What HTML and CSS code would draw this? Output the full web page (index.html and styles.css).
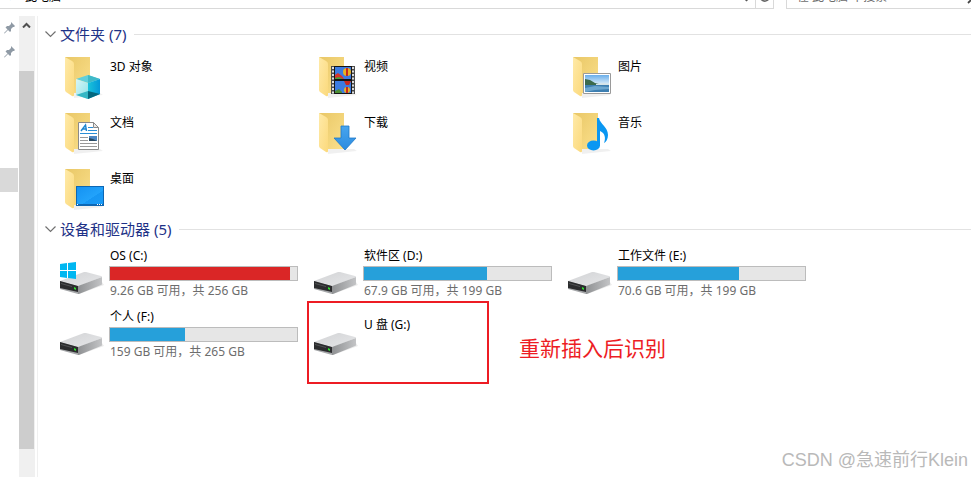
FILE: index.html
```html
<!DOCTYPE html>
<html lang="zh-CN">
<head>
  <meta charset="UTF-8">
  <meta name="viewport" content="width=device-width, initial-scale=1.0">
  <title>此电脑</title>
  <link rel="stylesheet" href="styles.css">
</head>
<body>
  <!-- shared icon shapes -->
  <svg class="sprite" width="0" height="0" aria-hidden="true">
    <defs>
      <linearGradient id="g-back" x1="0" y1="0" x2="1" y2="1">
        <stop offset="0" stop-color="#e9c766"/>
        <stop offset="1" stop-color="#fbe08c"/>
      </linearGradient>
      <linearGradient id="g-flap" x1="0" y1="0" x2="1" y2="1">
        <stop offset="0" stop-color="#ffeaa8"/>
        <stop offset="1" stop-color="#fbd97c"/>
      </linearGradient>
      <linearGradient id="g-top" x1="0" y1="0" x2="1" y2="1">
        <stop offset="0" stop-color="#d2d3d5"/>
        <stop offset="1" stop-color="#e6e7e9"/>
      </linearGradient>
      <linearGradient id="g-side" x1="0" y1="0" x2="1" y2="0">
        <stop offset="0" stop-color="#8f9193"/>
        <stop offset="1" stop-color="#c3c4c6"/>
      </linearGradient>
      <linearGradient id="g-cube-l" x1="0" y1="0" x2="1" y2="1">
        <stop offset="0" stop-color="#d8f6f7"/>
        <stop offset="1" stop-color="#8ee2e8"/>
      </linearGradient>
      <linearGradient id="g-cube-r" x1="0" y1="0" x2="1" y2="0">
        <stop offset="0" stop-color="#19c3da"/>
        <stop offset="1" stop-color="#0498d8"/>
      </linearGradient>
      <linearGradient id="g-screen" x1="0" y1="0" x2="1" y2="1">
        <stop offset="0" stop-color="#1592f2"/>
        <stop offset="0.6" stop-color="#22a3fb"/>
        <stop offset="0.61" stop-color="#1797f4"/>
        <stop offset="1" stop-color="#1a9bf7"/>
      </linearGradient>
      <linearGradient id="g-sky" x1="0" y1="0" x2="0" y2="1">
        <stop offset="0" stop-color="#6aaeea"/>
        <stop offset="1" stop-color="#e4f2fb"/>
      </linearGradient>
      <linearGradient id="g-arrow" x1="0" y1="0" x2="0" y2="1">
        <stop offset="0" stop-color="#48a5ee"/>
        <stop offset="1" stop-color="#2b8be0"/>
      </linearGradient>
      <symbol id="folder" viewBox="0 0 48 48">
        <path fill="#000" opacity="0.06" d="M18 40h26l3 2-29 3z"/>
        <path fill="url(#g-back)" d="M9 4h25v36H17z"/>
        <path fill="url(#g-flap)" d="M9 4l7 4q2 1 2 3v31q0 2-2 1l-6-4q-1-1-1-2z"/>
      </symbol>
      <symbol id="drive" viewBox="0 0 48 48">
        <path fill="#000" opacity="0.08" d="M23 45l25-9-2-3z"/>
        <path fill="url(#g-top)" d="M4 32l24-9q1 0 2 0l15 4q1 0 1 1L23 37z"/>
        <path fill="url(#g-side)" d="M22 37l24-9v7q0 1-1 1L23 45h-1z"/>
        <path fill="#a5a7a9" d="M4 32l18 5v8L4 40z"/>
        <path fill="#2b2c2e" d="M4 32l18 5v6L4 39z"/>
        <path fill="#505254" d="M5 34l11 3v1L5 35z"/>
        <path fill="#2fe02f" d="M18 38l2 1v2l-2-1z"/>
      </symbol>
      <symbol id="pin" viewBox="0 0 12 12">
        <path fill="#8f9aa5" d="M7 0l4 4-1 1-1 0-2 2v2L6 10 4 8l-3.500 3.500L0 11l3.500-3.500L1.500 5.500 3 4h2l2-2V1z"/>
      </symbol>
      <symbol id="chevron" viewBox="0 0 11 8">
        <path fill="none" stroke="#707070" stroke-width="1.200" d="M0.500 1.500l5 5 5-5"/>
      </symbol>
    </defs>
  </svg>

  <header class="toolbar">
    <div class="address">
      <span class="crumb-sep">›</span>
      <span class="crumb">此电脑</span>
      <svg class="address-arrow" width="9" height="10" viewBox="0 0 9 10"><path fill="none" stroke="#555" stroke-width="1.500" d="M1 5l3.500 3.500L8 5"/></svg>
      <button class="refresh" aria-label="刷新">
        <svg width="12" height="14" viewBox="0 0 12 14"><path fill="none" stroke="#666" stroke-width="1.600" d="M9.500 5a4.500 4.500 0 1 0 .8 3M10 1v4H6.500"/></svg>
      </button>
    </div>
    <div class="search">
      <input type="text" class="search-input" aria-label="搜索" placeholder="在 此电脑 中搜索">
      <svg width="14" height="14" viewBox="0 0 14 14"><path fill="none" stroke="#444" stroke-width="1.800" d="M1 13l5-5"/><circle cx="8.500" cy="5.500" r="4" fill="none" stroke="#444"/></svg>
    </div>
  </header>

  <div class="explorer">
    <nav class="sidebar" aria-label="快速访问">
      <div class="nav-row"><svg width="12" height="12"><use href="#pin"/></svg></div>
      <div class="nav-row"><svg width="12" height="12"><use href="#pin"/></svg></div>
      <div class="nav-row nav-selected"></div>
    </nav>
    <div class="scrollbar" aria-hidden="true">
      <div class="scroll-up">
        <svg width="9" height="6" viewBox="0 0 9 6"><path fill="none" stroke="#505050" stroke-width="2" d="M1 5.500L4.500 2 8 5.500"/></svg>
      </div>
      <div class="scroll-thumb"></div>
      <div class="scroll-rest"></div>
    </div>

    <main class="content">
      <section>
        <h2 class="group-title"><svg width="11" height="8"><use href="#chevron"/></svg>文件夹 (7)</h2>
        <div class="tiles folders">
          <a href="#" class="tile">
            <svg class="icon" viewBox="0 0 48 48">
              <use href="#folder"/>
              <path fill="#62cfda" d="M20 26l12-4 12 4-12 4z"/>
              <path fill="#3fb9c8" d="M32 22l12 4-12 4z"/>
              <path fill="url(#g-cube-l)" d="M20 26l12 4v16l-12-4z"/>
              <path fill="url(#g-cube-r)" d="M32 30l12-4v15l-12 5z"/>
              <path fill="#35b7c5" d="M20 42l12-4v8z"/>
              <path fill="#04687f" d="M32 38l12 3-12 5z"/>
            </svg>
            <span class="tile-name">3D 对象</span>
          </a>
          <a href="#" class="tile">
            <svg class="icon" viewBox="0 0 48 48">
              <use href="#folder"/>
              <path fill="#4a4a4a" d="M21 13h24v28H21z"/>
              <path fill="#151515" d="M24 13h18v28H24z"/>
              <path fill="#3c7be0" d="M25 14h16v12H25zM25 28h16v12H25z"/>
              <path fill="#d8342c" d="M25 22l3-2 4 3 2 3h-9z"/>
              <path fill="#47a13b" d="M25 25l4-1 4 2h-8z"/>
              <circle cx="37" cy="19" r="4" fill="#e8b020"/>
              <path fill="#c8281e" d="M36 15h2v8h-2zM34 28h7l-2 4h-3z"/>
              <path fill="#4d8e35" d="M25 38l4-2 3 3v1h-7z"/>
              <circle cx="37" cy="37" r="3" fill="#e8b020"/>
              <path fill="#c8281e" d="M36 34h2v6h-2z"/>
              <path stroke="#ddd" stroke-width="2" stroke-dasharray="2 1.500" d="M23 14v27M43 14v27"/>
            </svg>
            <span class="tile-name">视频</span>
          </a>
          <a href="#" class="tile">
            <svg class="icon" viewBox="0 0 48 48">
              <use href="#folder"/>
              <path fill="#fff" stroke="#9a9a9a" d="M19.500 20.500h27v20h-27z"/>
              <path fill="url(#g-sky)" d="M21 22h24v10H21z"/>
              <path fill="#3e7fb1" d="M21 31h24v8H21z"/>
              <path fill="#3c6a4c" d="M21 26l5 1 5 3 8 2H21z"/>
              <path fill="#6da7cf" d="M21 35l10-2 14 1v2l-14 1-10 2z"/>
              <path fill="#d6e4e8" d="M32 31l8-1 5 1v1H32z"/>
            </svg>
            <span class="tile-name">图片</span>
          </a>
          <a href="#" class="tile">
            <svg class="icon" viewBox="0 0 48 48">
              <use href="#folder"/>
              <path fill="#fff" stroke="#8a8a8a" d="M22.500 13.500h15l5 5v22h-20z"/>
              <path fill="#e8e8e8" stroke="#8a8a8a" d="M37.500 13.500v5h5z"/>
              <path fill="none" stroke="#1f86d0" stroke-width="1.500" d="M25 22l4.500-6 1 6M27 20h3.500"/>
              <path stroke="#2a8ed6" d="M32 18.500h5M32 21.500h9M24 24.500h17"/>
              <path stroke="#999" d="M24 28.500h8M24 31.500h8M24 34.500h17M24 37.500h17"/>
              <path fill="#4c86c2" d="M33 27h8v5h-8z"/>
              <path fill="#28475f" d="M33 29l4 1 4 2h-8z"/>
            </svg>
            <span class="tile-name">文档</span>
          </a>
          <a href="#" class="tile">
            <svg class="icon" viewBox="0 0 48 48">
              <use href="#folder"/>
              <path fill="url(#g-arrow)" stroke="#1e78c8" stroke-width="0.800" d="M31 17h8v12h7L35 41 24 29h7z"/>
            </svg>
            <span class="tile-name">下载</span>
          </a>
          <a href="#" class="tile">
            <svg class="icon" viewBox="0 0 48 48">
              <use href="#folder"/>
              <ellipse cx="29.500" cy="36.500" rx="6.500" ry="5" fill="#0a97f2"/>
              <path fill="#0a97f2" d="M33 9h2c1 6 9 9 9 17 0 4-2 7-4 8 2-5 1-10-4-12v15h-3z"/>
            </svg>
            <span class="tile-name">音乐</span>
          </a>
          <a href="#" class="tile">
            <svg class="icon" viewBox="0 0 48 48">
              <use href="#folder"/>
              <path fill="#0d67b4" d="M20 21h28v20H20z"/>
              <path fill="url(#g-screen)" d="M21 22h26v17H21z"/>
              <path stroke="#fff" d="M21 39.500h1M41 39.500h1M43 39.500h1M45 39.500h1"/>
            </svg>
            <span class="tile-name">桌面</span>
          </a>
        </div>
      </section>

      <section>
        <h2 class="group-title"><svg width="11" height="8"><use href="#chevron"/></svg>设备和驱动器 (5)</h2>
        <div class="tiles drives">
          <a href="#" class="tile">
            <svg class="icon" viewBox="0 0 48 48">
              <use href="#drive"/>
              <path fill="#00b7f1" d="M4 15l7-1v7H4zM12 14l8-1v8h-8zM4 22h7v7l-7-1zM12 22h8v8l-8-1z"/>
            </svg>
            <div class="drive-info">
              <span class="tile-name">OS (C:)</span>
              <progress class="usage usage-full" aria-label="OS (C:)" value="246.74" max="256"></progress>
              <span class="drive-space">9.26 GB 可用，共 256 GB</span>
            </div>
          </a>
          <a href="#" class="tile">
            <svg class="icon"><use href="#drive"/></svg>
            <div class="drive-info">
              <span class="tile-name">软件区 (D:)</span>
              <progress class="usage" aria-label="软件区 (D:)" value="131.1" max="199"></progress>
              <span class="drive-space">67.9 GB 可用，共 199 GB</span>
            </div>
          </a>
          <a href="#" class="tile">
            <svg class="icon"><use href="#drive"/></svg>
            <div class="drive-info">
              <span class="tile-name">工作文件 (E:)</span>
              <progress class="usage" aria-label="工作文件 (E:)" value="128.4" max="199"></progress>
              <span class="drive-space">70.6 GB 可用，共 199 GB</span>
            </div>
          </a>
          <a href="#" class="tile">
            <svg class="icon"><use href="#drive"/></svg>
            <div class="drive-info">
              <span class="tile-name">个人 (F:)</span>
              <progress class="usage" aria-label="个人 (F:)" value="106" max="265"></progress>
              <span class="drive-space">159 GB 可用，共 265 GB</span>
            </div>
          </a>
          <div class="tile-marked">
            <a href="#" class="tile">
              <svg class="icon"><use href="#drive"/></svg>
              <div class="drive-info drive-empty">
                <span class="tile-name">U 盘 (G:)</span>
              </div>
            </a>
            <div class="mark-box"></div>
            <p class="mark-note">重新插入后识别</p>
          </div>
        </div>
      </section>
    </main>
  </div>

  <div class="watermark">CSDN @急速前行Klein</div>
</body>
</html>
```
FILE: styles.css
```css
:root {
  --title: #1e3287;
  --border: #d9d9d9;
  --muted: #6d6d6d;
  --blue: #26a0da;
  --red: #da2626;
  --mark: #ed1c24;
}

* {
  margin: 0;
  padding: 0;
  box-sizing: border-box;
}

body {
  min-height: 100vh;
  display: flex;
  flex-direction: column;
  background: #fff;
  color: #000;
  font-family: "Noto Sans", "Noto Sans CJK SC", sans-serif;
  font-size: 12px;
  line-height: 18px;
}

.sprite {
  position: absolute;
}

/* only the lower edge of the address row is in view */
.toolbar {
  display: flex;
  align-items: flex-end;
  gap: 12px;
  height: 9px;
  margin-bottom: 7px;
  overflow: hidden;
}

.address,
.search {
  display: flex;
  align-items: center;
  height: 24px;
  border: 1px solid var(--border);
}

.address {
  flex: 1;
  border-left: none;
}

.crumb-sep {
  width: 25px;
  padding-left: 9px;
  color: #666;
}

.address-arrow {
  margin-left: auto;
  margin-right: 4px;
}

.refresh {
  width: 18px;
  height: 100%;
  border: none;
  border-left: 1px solid var(--border);
  background: none;
}

.search {
  width: 185px;
  padding-left: 10px;
  border-right: none;
}

.search-input {
  flex: 1 0 170px;
  min-width: 0;
  border: none;
  outline: none;
  font: inherit;
}

.search-input::placeholder {
  color: var(--muted);
}

.search svg {
  flex: none;
}

.explorer {
  flex: 1;
  display: flex;
}

.sidebar {
  width: 19px;
  padding-right: 1px;
}

.nav-row {
  display: flex;
  align-items: center;
  height: 24px;
  padding-left: 4px;
}

.nav-selected {
  margin-top: 104px;
  background: var(--border);
}

.scrollbar {
  display: flex;
  flex-direction: column;
  width: 16px;
  padding-right: 1px;
  background: #f0f0f0;
}

.scroll-up {
  height: 55px;
  padding-top: 5px;
  text-align: center;
  line-height: 6px;
}

.scroll-thumb {
  flex: 27;
  background: #cdcdcd;
}

.scroll-rest {
  flex: 2;
}

.content {
  flex: 1;
  min-width: 0;
  margin-left: 2px;
  padding-top: 6px;
  border-left: 1px solid #f0f0f0;
}

.group-title {
  display: flex;
  align-items: center;
  gap: 4px;
  padding-left: 7px;
  color: var(--title);
  font-size: 15px;
  font-weight: 400;
  line-height: 24px;
}

.group-title::after {
  content: "";
  flex: 1;
  height: 1px;
  margin-left: 4px;
  background: #e2e2e2;
}

.tiles {
  display: grid;
  grid-template-columns: repeat(auto-fill, 254px);
  padding-left: 18px;
}

.folders {
  row-gap: 8px;
  padding-top: 7px;
  padding-bottom: 4px;
}

.drives {
  row-gap: 9px;
  padding-top: 6px;
}

.tile {
  display: flex;
  gap: 5px;
  color: inherit;
  text-decoration: none;
}

.icon {
  flex: none;
  width: 48px;
  height: 48px;
}

.tile-name,
.drive-space {
  display: block;
  padding-left: 1px;
}

.folders .tile-name {
  padding-top: 5px;
}

.drives .tile {
  align-items: center;
  height: 52px;
}

.drive-space {
  color: var(--muted);
}

.drive-empty {
  padding-bottom: 18px;
}

.usage {
  display: block;
  width: 189px;
  height: 15px;
  margin: 1px 0;
  border: 1px solid #bcbcbc;
  background: #e6e6e6;
  appearance: none;
}

.usage::-webkit-progress-bar {
  background: #e6e6e6;
}

.usage::-webkit-progress-value {
  background: var(--blue);
}

.usage-full::-webkit-progress-value {
  background: var(--red);
}

/* red note drawn over the drive list */
.tile-marked {
  position: relative;
}

.mark-box {
  position: absolute;
  top: -7px;
  left: -3px;
  width: 182px;
  height: 83px;
  border: 2px solid var(--mark);
}

.mark-note {
  position: absolute;
  top: 25px;
  left: 209px;
  color: var(--mark);
  font-size: 21px;
  line-height: 30px;
  white-space: nowrap;
}

.watermark {
  position: absolute;
  right: 3px;
  bottom: 5px;
  color: #b9b9b9;
  font-family: "Liberation Sans", "Noto Sans CJK SC", sans-serif;
  font-size: 18px;
  line-height: 24px;
}
```
